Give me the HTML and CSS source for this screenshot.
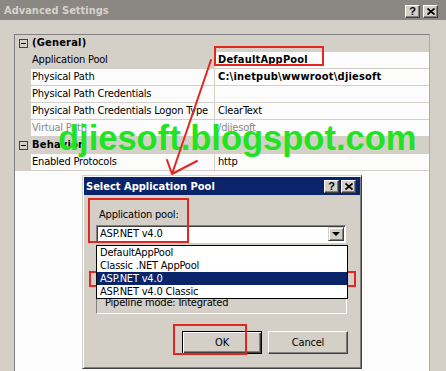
FILE: index.html
```html
<!DOCTYPE html>
<html>
<head>
<meta charset="utf-8">
<title>Advanced Settings</title>
<link rel="stylesheet" href="styles.css">
</head>
<body>
<div class="win">
  <div class="win-title">
    <span class="win-title-text">Advanced Settings</span>
    <div class="caption-btns main-caps">
      <span class="cap-btn">?</span>
      <span class="cap-btn"><svg width="8" height="7" viewBox="0 0 8 7"><path d="M0.5 0.5 L7.5 6.5 M7.5 0.5 L0.5 6.5" stroke="#000" stroke-width="1.7" fill="none"/></svg></span>
    </div>
  </div>
  <div class="win-body">
    <div class="pgrid">
      <div class="row cat"><span class="gutter"><span class="minus"></span></span><span class="name">(General)</span></div>
      <div class="row sel"><span class="gutter"></span><span class="name">Application Pool</span><span class="val bold">DefaultAppPool</span></div>
      <div class="row"><span class="gutter"></span><span class="name">Physical Path</span><span class="val bold">C:\inetpub\wwwroot\djiesoft</span></div>
      <div class="row"><span class="gutter"></span><span class="name">Physical Path Credentials</span><span class="val"></span></div>
      <div class="row"><span class="gutter"></span><span class="name">Physical Path Credentials Logon Type</span><span class="val">ClearText</span></div>
      <div class="row dis"><span class="gutter"></span><span class="name">Virtual Path</span><span class="val">/djiesoft</span></div>
      <div class="row cat"><span class="gutter"><span class="minus"></span></span><span class="name">Behavior</span></div>
      <div class="row"><span class="gutter"></span><span class="name">Enabled Protocols</span><span class="val">http</span></div>
    </div>
  </div>
</div>

<div class="watermark">djiesoft.blogspot.com</div>

<div class="dialog">
  <div class="dlg-title">
    <span class="dlg-title-text">Select Application Pool</span>
    <div class="caption-btns dlg-caps">
      <span class="cap-btn">?</span>
      <span class="cap-btn"><svg width="8" height="7" viewBox="0 0 8 7"><path d="M0.5 0.5 L7.5 6.5 M7.5 0.5 L0.5 6.5" stroke="#000" stroke-width="1.7" fill="none"/></svg></span>
    </div>
  </div>
  <div class="dlg-body">
    <div class="dlg-label">Application pool:</div>
    <div class="combo-wrap">
      <div class="combo">
        <span class="combo-text">ASP.NET v4.0</span>
        <span class="combo-btn"><span class="tri"></span></span>
      </div>
      <div class="combo-list">
        <div class="combo-item">DefaultAppPool</div>
        <div class="combo-item">Classic .NET AppPool</div>
        <div class="combo-item active">ASP.NET v4.0</div>
        <div class="combo-item">ASP.NET v4.0 Classic</div>
      </div>
    </div>
    <div class="info-panel">
      <div class="info-line">.NET Framework version: 4.0</div>
      <div class="info-line">Pipeline mode: Integrated</div>
    </div>
    <div class="dlg-buttons">
      <button class="btn default">OK</button>
      <button class="btn">Cancel</button>
    </div>
  </div>
</div>

<svg class="arrow" width="446" height="371" viewBox="0 0 446 371">
  <path d="M211 60 L172 174 M167 160 L172 174 L197 161" stroke="#e3261f" stroke-width="2" fill="none" stroke-linecap="round" stroke-linejoin="round"/>
</svg>

<div class="mark mark-value"></div>
<div class="mark mark-label"></div>
<div class="mark mark-item"></div>
<div class="mark mark-ok"></div>
</body>
</html>
```

FILE: styles.css
```css
* { box-sizing: border-box; }
html, body { margin: 0; padding: 0; }
body {
  width: 446px;
  height: 371px;
  overflow: hidden;
  position: relative;
  background: #d4d0c8;
  font-family: "DejaVu Sans Condensed", "Liberation Sans", sans-serif;
  font-size: 11px;
  letter-spacing: -0.2px;
  color: #000;
}

/* main window */
.win-title {
  height: 20px;
  background: #8b8783;
  display: flex;
  align-items: center;
  justify-content: space-between;
  padding: 0 8px 0 4px;
}
.win-title-text {
  color: #d6d2ca;
  font-weight: bold;
  font-size: 11px;
  letter-spacing: 0;
}
.caption-btns { display: flex; gap: 3px; }
.main-caps { margin-top: 3px; }
.cap-btn {
  width: 15px;
  height: 13px;
  background: #d4d0c8;
  border: 1px solid;
  border-color: #fff #404040 #404040 #fff;
  box-shadow: inset -1px -1px #808080;
  display: flex;
  align-items: center;
  justify-content: center;
  font-family: "Liberation Sans", sans-serif;
  font-weight: bold;
  font-size: 11px;
  letter-spacing: 0;
  line-height: 1;
}
.win-body { padding: 14px 16px 0 14px; }

/* property grid */
.pgrid {
  width: 416px;
  height: 338px;
  border: 1px solid #808080;
  border-right-color: #b0aca4;
  background: #fcfcfc;
}
.row {
  display: grid;
  grid-template-columns: 16px 184px 1fr;
  height: 17px;
}
.gutter { background: #d4d0c8; }
.name {
  padding-left: 1px;
  line-height: 16px;
  border-bottom: 1px solid #d4d0c8;
  border-right: 1px solid #d4d0c8;
  white-space: nowrap;
  overflow: hidden;
}
.val {
  padding-left: 3px;
  line-height: 16px;
  border-bottom: 1px solid #d4d0c8;
  white-space: nowrap;
  overflow: hidden;
}
.bold { font-weight: bold; letter-spacing: 0.2px; }
.cat { background: #d4d0c8; }
.cat .name {
  grid-column: 2 / 4;
  border: none;
  font-weight: bold;
  letter-spacing: 0.2px;
}
.cat .gutter {
  display: flex;
  align-items: center;
  justify-content: center;
}
.minus {
  width: 9px;
  height: 9px;
  border: 1px solid #404040;
  position: relative;
}
.minus::after {
  content: "";
  position: absolute;
  left: 1px;
  right: 1px;
  top: 3px;
  height: 1px;
  background: #000;
}
.sel .name { background: #d4d0c8; }
.dis .name, .dis .val { color: #8a8a8a; }

/* watermark */
.watermark {
  position: absolute;
  left: 58px;
  top: 121px;
  font-family: "Liberation Sans", Arial, sans-serif;
  font-weight: bold;
  font-size: 34.5px;
  line-height: 34px;
  letter-spacing: 0;
  color: #22e322;
  white-space: nowrap;
}

/* dialog window */
.dialog {
  position: absolute;
  left: 82px;
  top: 175px;
  width: 280px;
  height: 194px;
  background: #d4d0c8;
  border: 1px solid;
  border-color: #d4d0c8 #404040 #404040 #d4d0c8;
  box-shadow: inset 1px 1px #fff, inset -1px -1px #808080;
  padding: 1px;
  display: flex;
  flex-direction: column;
}
.dlg-title {
  height: 18px;
  background: #0a246a;
  display: flex;
  align-items: center;
  justify-content: space-between;
  padding: 0 4px 0 2px;
}
.dlg-title-text {
  color: #fff;
  font-weight: bold;
  font-size: 11px;
  letter-spacing: 0;
}
.dlg-caps { gap: 2px; }
.dlg-body { padding: 13px 12px 0 12px; }
.dlg-label {
  line-height: 13px;
  padding-left: 3px;
}
.combo-wrap {
  position: relative;
  margin-top: 4px;
  width: 250px;
  height: 18px;
}
.combo {
  height: 18px;
  border: 1px solid;
  border-color: #808080 #fff #fff #808080;
  box-shadow: inset 1px 1px #404040;
  background: #fff;
  display: flex;
  padding: 1px;
}
.combo-text {
  flex: 1;
  padding-left: 2px;
  line-height: 14px;
}
.combo-btn {
  width: 16px;
  background: #d4d0c8;
  border: 1px solid;
  border-color: #d4d0c8 #404040 #404040 #d4d0c8;
  box-shadow: inset 1px 1px #fff, inset -1px -1px #808080;
  display: flex;
  align-items: center;
  justify-content: center;
}
.tri {
  width: 0;
  height: 0;
  border-top: 4px solid #000;
  border-left: 4px solid transparent;
  border-right: 4px solid transparent;
}
.combo-list {
  position: absolute;
  left: 0;
  top: 20px;
  width: 252px;
  border: 1px solid #000;
  background: #fff;
  z-index: 2;
}
.combo-item {
  height: 13px;
  line-height: 13px;
  padding-left: 3px;
  white-space: nowrap;
}
.combo-item.active {
  background: #0a246a;
  color: #fff;
}
.info-panel {
  margin-top: 7px;
  width: 251px;
  height: 64px;
  border: 1px solid;
  border-color: #808080 #fff #fff #808080;
  display: flex;
  flex-direction: column;
  justify-content: flex-end;
  padding: 0 8px 4px 8px;
}
.info-line { line-height: 13px; }
.dlg-buttons {
  margin-top: 17px;
  display: flex;
  justify-content: flex-end;
  gap: 6px;
}
.btn {
  width: 80px;
  height: 23px;
  margin: 0;
  padding: 0;
  background: #d4d0c8;
  border: 1px solid;
  border-color: #fff #404040 #404040 #fff;
  box-shadow: inset -1px -1px #808080;
  font-family: inherit;
  font-size: 11px;
  letter-spacing: -0.2px;
  color: #000;
}
.btn.default {
  border: 1px solid #000;
  box-shadow: inset 1px 1px #fff, inset -1px -1px #404040, inset -2px -2px #808080;
}

/* annotations */
.arrow {
  position: absolute;
  left: 0;
  top: 0;
  pointer-events: none;
}
.mark {
  position: absolute;
  border: 2px solid #e3261f;
}
.mark-value { left: 214px; top: 46px; width: 110px; height: 20px; }
.mark-label { left: 88px; top: 198px; width: 101px; height: 45px; }
.mark-item { left: 89px; top: 271px; width: 267px; height: 16px; }
.mark-ok { left: 173px; top: 324px; width: 74px; height: 31px; }
```
